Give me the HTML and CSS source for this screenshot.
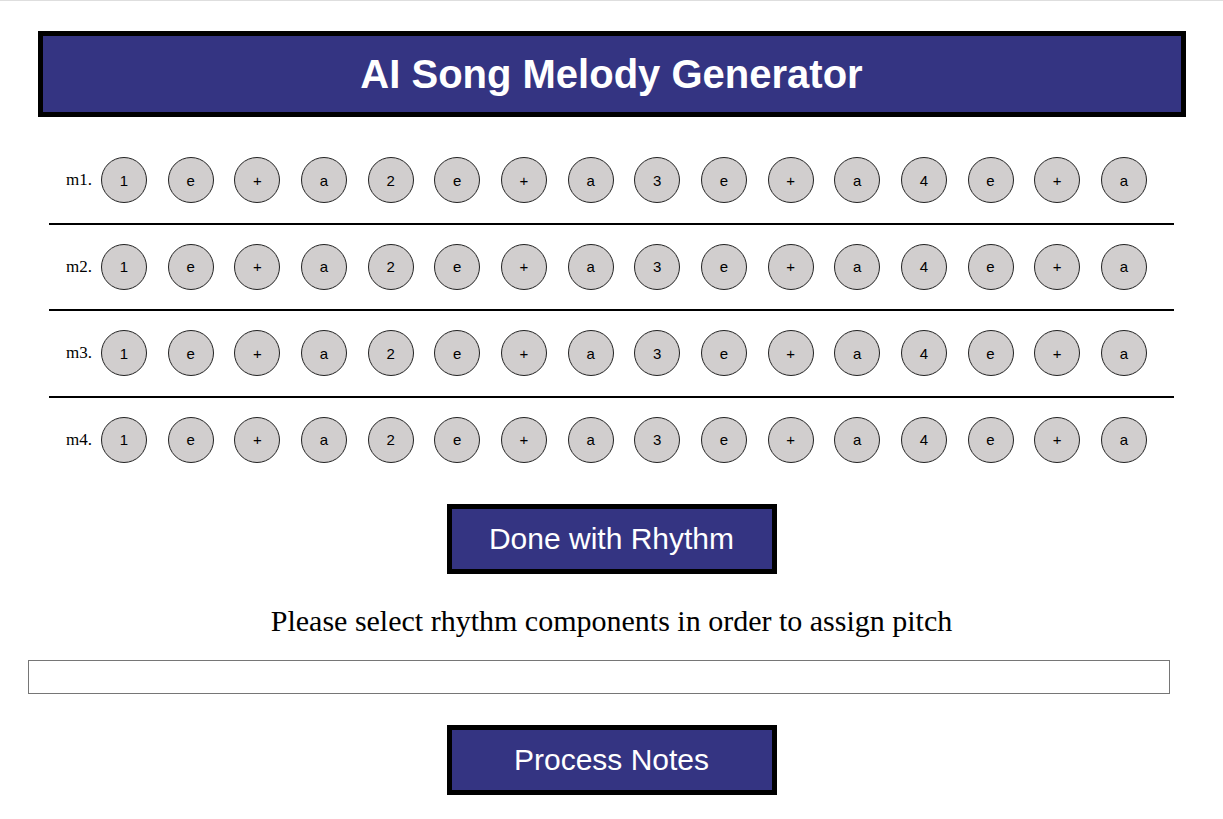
FILE: index.html
```html
<!DOCTYPE html>
<html lang="en">
<head>
<meta charset="utf-8">
<title>AI Song Melody Generator</title>
<link rel="stylesheet" href="styles.css">
</head>
<body>
<div class="page">
  <header class="banner">
    <h1 class="title">AI Song Melody Generator</h1>
  </header>

  <section class="measures">
    <div class="measure">
      <span class="label">m1.</span>
      <div class="beats">
        <button class="beat">1</button><button class="beat">e</button><button class="beat">+</button><button class="beat">a</button>
        <button class="beat">2</button><button class="beat">e</button><button class="beat">+</button><button class="beat">a</button>
        <button class="beat">3</button><button class="beat">e</button><button class="beat">+</button><button class="beat">a</button>
        <button class="beat">4</button><button class="beat">e</button><button class="beat">+</button><button class="beat">a</button>
      </div>
    </div>
    <div class="measure">
      <span class="label">m2.</span>
      <div class="beats">
        <button class="beat">1</button><button class="beat">e</button><button class="beat">+</button><button class="beat">a</button>
        <button class="beat">2</button><button class="beat">e</button><button class="beat">+</button><button class="beat">a</button>
        <button class="beat">3</button><button class="beat">e</button><button class="beat">+</button><button class="beat">a</button>
        <button class="beat">4</button><button class="beat">e</button><button class="beat">+</button><button class="beat">a</button>
      </div>
    </div>
    <div class="measure">
      <span class="label">m3.</span>
      <div class="beats">
        <button class="beat">1</button><button class="beat">e</button><button class="beat">+</button><button class="beat">a</button>
        <button class="beat">2</button><button class="beat">e</button><button class="beat">+</button><button class="beat">a</button>
        <button class="beat">3</button><button class="beat">e</button><button class="beat">+</button><button class="beat">a</button>
        <button class="beat">4</button><button class="beat">e</button><button class="beat">+</button><button class="beat">a</button>
      </div>
    </div>
    <div class="measure">
      <span class="label">m4.</span>
      <div class="beats">
        <button class="beat">1</button><button class="beat">e</button><button class="beat">+</button><button class="beat">a</button>
        <button class="beat">2</button><button class="beat">e</button><button class="beat">+</button><button class="beat">a</button>
        <button class="beat">3</button><button class="beat">e</button><button class="beat">+</button><button class="beat">a</button>
        <button class="beat">4</button><button class="beat">e</button><button class="beat">+</button><button class="beat">a</button>
      </div>
    </div>
  </section>

  <button class="action action-rhythm">Done with Rhythm</button>

  <p class="instructions">Please select rhythm components in order to assign pitch</p>

  <input class="notes-input" type="text" aria-label="Notes">

  <button class="action action-process">Process Notes</button>
</div>
</body>
</html>
```

FILE: styles.css
```css
html, body {
  margin: 0;
  padding: 0;
  background: #ffffff;
}

body {
  font-family: "Liberation Serif", "Times New Roman", serif;
  color: #000;
}

.page {
  border-top: 1px solid #dedede;
  display: flex;
  flex-direction: column;
}

.banner {
  box-sizing: border-box;
  width: 1148px;
  height: 86px;
  margin: 30px auto 0;
  border: 5px solid #000;
  background: #343482;
  display: flex;
  align-items: center;
  justify-content: center;
}

.title {
  margin: 0;
  font-family: "Liberation Sans", Arial, sans-serif;
  font-weight: bold;
  font-size: 40px;
  color: #fff;
  line-height: 1;
}

.measures {
  width: 1125px;
  margin: 22px auto 0;
}

.measure {
  display: flex;
  align-items: center;
  padding: 18px 0 19.6px 17px;
  border-bottom: 2px solid #000;
}

.measure + .measure {
  padding-top: 19px;
}

.measure:last-child {
  border-bottom: none;
}

.label {
  width: 35px;
  font-size: 17px;
  font-family: "Liberation Serif", "Times New Roman", serif;
}

.beats {
  display: flex;
  gap: 20.67px;
}

.beat {
  box-sizing: border-box;
  width: 46px;
  height: 46px;
  padding: 0;
  border: 1px solid #222;
  border-radius: 50%;
  background: #d1cece;
  color: #000;
  font-family: "Liberation Sans", Arial, sans-serif;
  font-size: 15px;
  display: flex;
  align-items: center;
  justify-content: center;
}

.action {
  box-sizing: border-box;
  width: 330px;
  height: 70px;
  margin: 0 auto;
  border: 5px solid #000;
  background: #343482;
  color: #fff;
  font-family: "Liberation Sans", Arial, sans-serif;
  font-size: 30px;
  padding: 0;
}

.action-rhythm {
  margin-top: 22px;
}

.instructions {
  margin: 31px 0 0;
  text-align: center;
  font-size: 30px;
  line-height: 32px;
}

.notes-input {
  box-sizing: border-box;
  width: 1142px;
  height: 34px;
  margin: 23px 0 0 28px;
  border: 1px solid #767676;
  padding: 0;
}

.action-process {
  margin-top: 31px;
}
```
